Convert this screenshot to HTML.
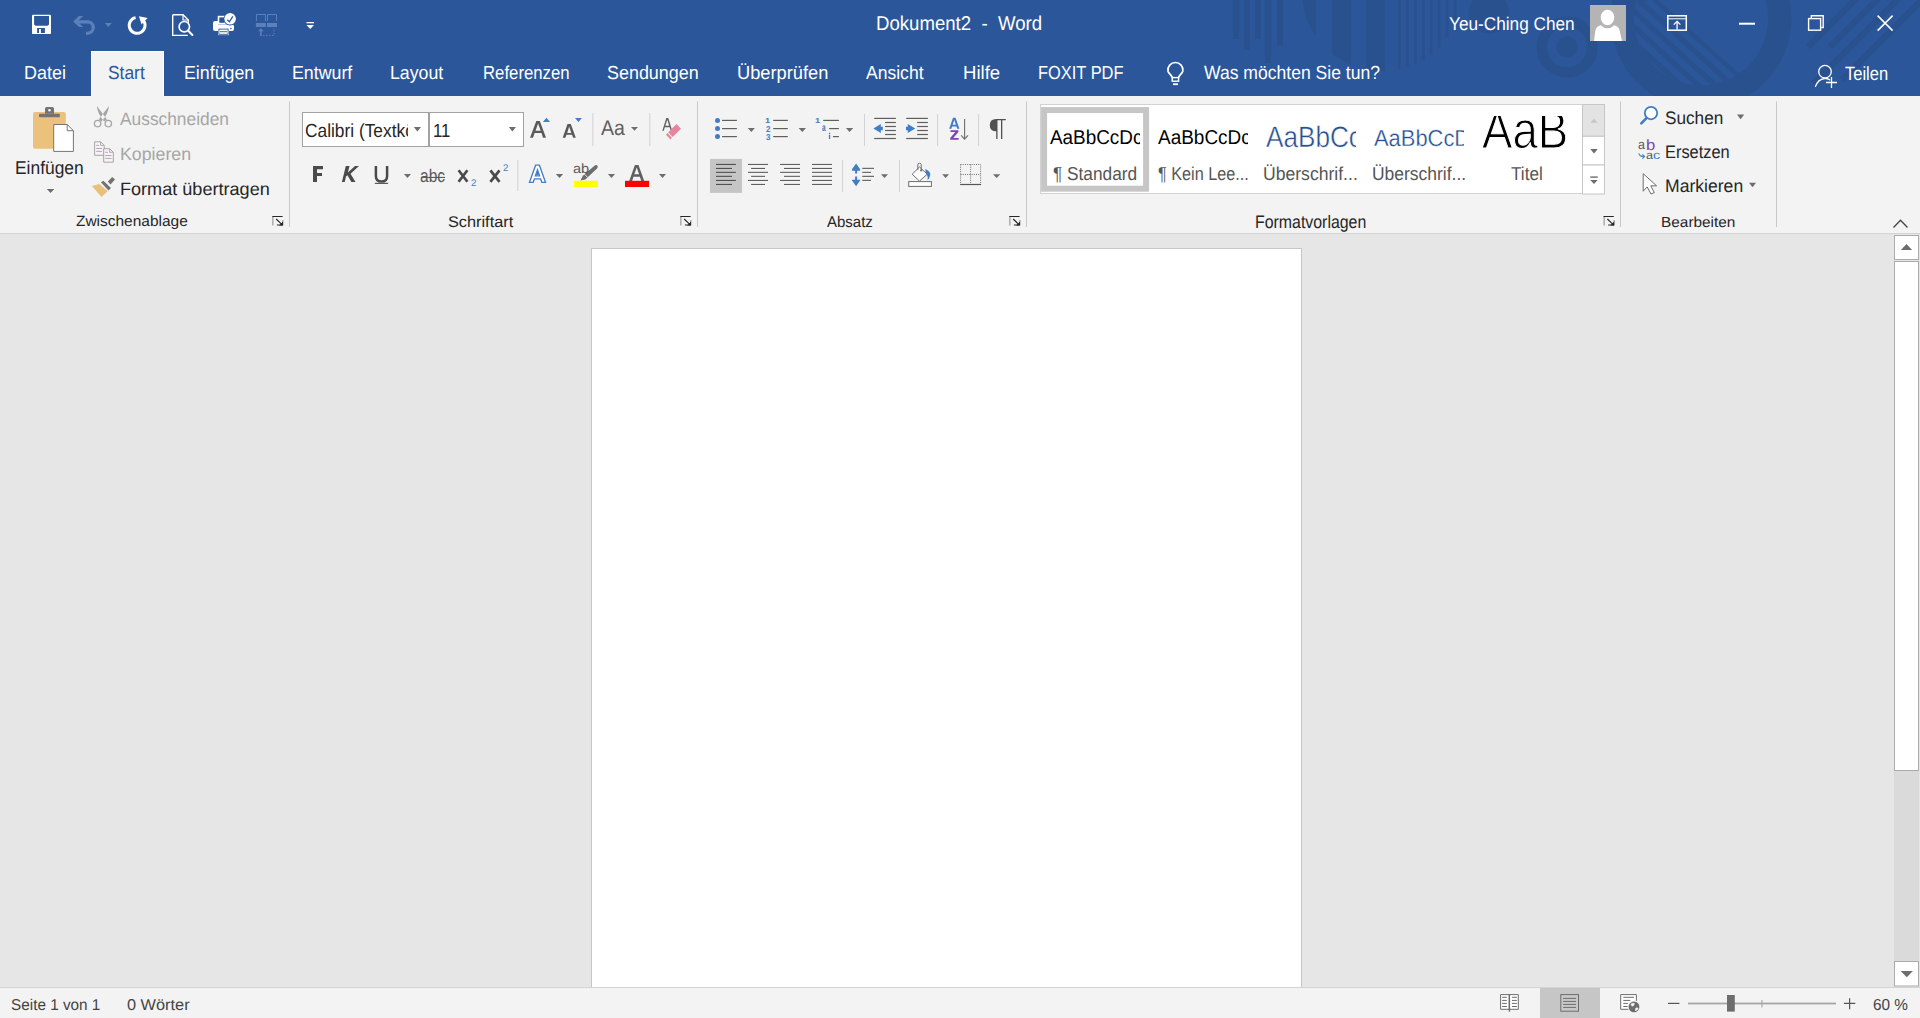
<!DOCTYPE html>
<html><head><meta charset="utf-8"><title>Dokument2 - Word</title>
<style>
html,body{margin:0;padding:0}
body{width:1920px;height:1018px;position:relative;overflow:hidden;background:#e6e6e6;font-family:"Liberation Sans",sans-serif}
.r{position:absolute}
.tx{position:absolute;white-space:pre;transform-origin:0 0;font-family:"Liberation Sans",sans-serif;text-rendering:geometricPrecision}
.clip{position:absolute;overflow:hidden}
svg{position:absolute;left:0;top:0}
</style></head><body>
<div class="r" style="left:0;top:0;width:1920px;height:96px;background:#2b579a"></div>
<div class="r" style="left:91px;top:51px;width:73px;height:45px;background:#fdfdfd"></div><div class="r" style="left:92px;top:52px;width:71px;height:44px;background:#f3f3f3"></div>
<div class="r" style="left:0;top:96px;width:1920px;height:137px;background:#f3f3f3"></div>
<div class="r" style="left:0;top:233px;width:1920px;height:1px;background:#d4d4d4"></div>
<div class="r" style="left:591px;top:248px;width:709px;height:739px;background:#fff;border:1px solid #c6c6c6;border-bottom:none"></div>
<div class="r" style="left:0;top:987px;width:1920px;height:1px;background:#d4d4d4"></div>
<div class="r" style="left:0;top:988px;width:1920px;height:30px;background:#f3f3f3"></div>
<div class="r" style="left:1540px;top:988px;width:60px;height:30px;background:#c6c6c6"></div>
<svg width="1920" height="1018" viewBox="0 0 1920 1018"><g fill="#29518e"><rect x="1233" y="0" width="6" height="39"/><rect x="1244" y="0" width="6" height="50"/><rect x="1255" y="0" width="6" height="39"/><rect x="1265" y="0" width="6" height="63"/><rect x="1277" y="0" width="6" height="46"/><path d="M1302.5 0 Q1305 22 1316 36 V0 Z"/><path d="M1332 0 H1351 V65 L1332 54 Z"/><path d="M1366 0 H1385 V71 H1366 Z"/><rect x="1398.00" y="0" width="2.8" height="69.4"/><rect x="1405.95" y="0" width="2.8" height="67.1"/><rect x="1413.90" y="0" width="2.8" height="63.8"/><rect x="1421.85" y="0" width="2.8" height="60.4"/><rect x="1429.80" y="0" width="2.8" height="54.8"/><rect x="1437.75" y="0" width="2.8" height="47.4"/><rect x="1445.70" y="0" width="2.8" height="37.5"/><rect x="1453.65" y="0" width="2.8" height="27.0"/><circle cx="1489" cy="13" r="20.6"/><circle cx="1567" cy="47" r="25.3" fill="none" stroke="#29518e" stroke-width="10.5"/><circle cx="1567" cy="47" r="10.5"/></g><defs><clipPath id="tb"><rect x="0" y="0" width="1920" height="96"/></clipPath><clipPath id="inner"><circle cx="1701" cy="18.4" r="67"/></clipPath></defs><g clip-path="url(#tb)"><circle cx="1701" cy="18.4" r="78.75" fill="none" stroke="#29518e" stroke-width="23.5"/><g clip-path="url(#inner)"><path d="M1658 0 L1778 109.2 L1500 109.2 L1500 0 Z" fill="#29518e"/><line x1="1647" y1="0" x2="1767" y2="109.2" stroke="#2b579a" stroke-width="6.3"/><line x1="1630" y1="0" x2="1750" y2="109.2" stroke="#2b579a" stroke-width="6.3"/><line x1="1613" y1="0" x2="1733" y2="109.2" stroke="#2b579a" stroke-width="6.3"/><line x1="1596" y1="0" x2="1716" y2="109.2" stroke="#2b579a" stroke-width="6.3"/><line x1="1579" y1="0" x2="1699" y2="109.2" stroke="#2b579a" stroke-width="6.3"/></g><line x1="1808" y1="47" x2="1857" y2="-2" stroke="#29518e" stroke-width="6.5"/><line x1="1830" y1="47" x2="1879" y2="-2" stroke="#29518e" stroke-width="6.5"/><line x1="1813" y1="84" x2="1910" y2="-13" stroke="#29518e" stroke-width="6.5"/><line x1="1842" y1="80" x2="1925" y2="-3" stroke="#29518e" stroke-width="6.5"/></g><rect x="32" y="14.8" width="19" height="19.3" rx="1.2" fill="#ffffff"/><path d="M34.1 16.1 H49 V24.4 L47.6 25.8 H35.5 L34.1 24.4 Z" fill="#2b579a"/><rect x="37.1" y="28" width="7.8" height="5" fill="#2b579a"/><rect x="39" y="29" width="1.9" height="4" fill="#ffffff"/><path d="M77 21.8 H87.5 A5.7 5.7 0 0 1 87.5 33.3 H86" fill="none" stroke="#5b80ba" stroke-width="3.3"/><path d="M73.2 21.5 L79 15.9 H83.1 L77.5 21.5 L83.1 27.1 H79 Z" fill="#5b80ba"/><path d="M104.9 23.1 H111.9 L108.4 27.1 Z" fill="#5b80ba"/><path d="M135.6 17.6 A7.9 7.9 0 1 0 143.2 20.3" fill="none" stroke="#ffffff" stroke-width="3"/><path d="M139 16.2 L147.6 17.9 L141.5 24.6 Z" fill="#ffffff"/><path d="M172.7 14.7 H183 L188.3 20 V31 M172.7 14.7 V35.4 H187.8" fill="none" stroke="#ffffff" stroke-width="1.4"/><path d="M183 14.7 V20 H188.3" fill="none" stroke="#ffffff" stroke-width="1.2"/><circle cx="184.3" cy="26.7" r="5.2" fill="#2b579a" stroke="#ffffff" stroke-width="1.7"/><line x1="188" y1="30.5" x2="192.4" y2="35" stroke="#ffffff" stroke-width="2" stroke-linecap="round"/><rect x="218.5" y="16.6" width="7" height="7" fill="#2b579a" stroke="#ffffff" stroke-width="1.6"/><path d="M213 23 Q213 21 215 21 H218 V24.5 H232 Q234 24.5 234 26.5 V29 Q234 31 232 31 H215 Q213 31 213 29 Z" fill="#ffffff"/><rect x="218" y="28.3" width="11" height="6.8" fill="#ffffff"/><rect x="218.9" y="29.1" width="9.2" height="5.2" fill="none" stroke="#2b579a" stroke-width="0.9"/><line x1="220" y1="31.7" x2="227" y2="31.7" stroke="#2b579a" stroke-width="0.9"/><circle cx="230.9" cy="28.6" r="0.8" fill="#2b579a"/><circle cx="230.1" cy="18.8" r="6.6" fill="#2b579a"/><circle cx="230.1" cy="18.8" r="5.8" fill="#ffffff"/><path d="M227.3 19.8 L229.4 21.8 L232.8 16.3" fill="none" stroke="#2b579a" stroke-width="1.3"/><path d="M256.4 21 V14.5 H265.4 V21 M267.5 21 V14.5 H276.5 V21" fill="none" stroke="#5b80ba" stroke-width="1"/><rect x="255.9" y="23" width="10" height="4" fill="#5b80ba"/><rect x="267" y="23" width="10" height="4" fill="#5b80ba"/><path d="M258 31.2 L260.9 28.2 L263.8 31.2 Z" fill="#5b80ba"/><rect x="260.1" y="30" width="1.6" height="6" fill="#5b80ba"/><path d="M263 35.4 H274 V28" fill="none" stroke="#5b80ba" stroke-width="1" stroke-dasharray="1.5 1.5"/><rect x="306.5" y="22" width="7.5" height="1.3" fill="#ffffff"/><path d="M306.5 25 H314 L310.25 29 Z" fill="#ffffff"/><rect x="1590" y="5" width="36" height="36" fill="#b4b4b4"/><path d="M1594 41 L1595.3 31 Q1596 26.2 1600.8 25.2 Q1604 28.3 1607.5 28.3 Q1611 28.3 1614.2 25.2 Q1619 26.2 1619.7 31 L1622 41 Z" fill="#ffffff"/><ellipse cx="1607.5" cy="17.6" rx="7.6" ry="8.6" fill="#b4b4b4"/><ellipse cx="1607.5" cy="17.5" rx="6.8" ry="7.8" fill="#ffffff"/><rect x="1667.8" y="15.8" width="18.5" height="14.4" fill="none" stroke="#ffffff" stroke-width="1.5"/><line x1="1668" y1="18.8" x2="1686" y2="18.8" stroke="#ffffff" stroke-width="1"/><line x1="1677.1" y1="21.2" x2="1677.1" y2="29.5" stroke="#ffffff" stroke-width="1.3"/><path d="M1673.8 24.6 L1677.1 21.3 L1680.4 24.6" fill="none" stroke="#ffffff" stroke-width="1.3"/><rect x="1739" y="22.7" width="16" height="2" fill="#ffffff"/><path d="M1811.3 17.9 V15.8 H1823.2 V27.5 H1821.2" fill="none" stroke="#ffffff" stroke-width="1.4"/><rect x="1808.6" y="18.6" width="12" height="11.6" fill="none" stroke="#ffffff" stroke-width="1.4"/><path d="M1877.6 15.6 L1892.6 30.6 M1892.6 15.6 L1877.6 30.6" stroke="#ffffff" stroke-width="1.5"/><path d="M1172.2 77.5 C1171.6 74.8 1168.6 73.5 1168 71.2 A7.5 7.5 0 1 1 1182.8 71.2 C1182.2 73.5 1179.2 74.8 1178.6 77.5" fill="none" stroke="#ffffff" stroke-width="1.7"/><rect x="1172.2" y="77.6" width="6.4" height="3.6" fill="none" stroke="#ffffff" stroke-width="1.4"/><rect x="1173" y="83.3" width="5" height="1.8" fill="#ffffff"/><circle cx="1825" cy="71.7" r="6.3" fill="none" stroke="#ffffff" stroke-width="1.3"/><path d="M1815.5 86.4 Q1818 79.5 1824.5 78.5 Q1827.5 78.3 1829.6 79.8" fill="none" stroke="#ffffff" stroke-width="1.3" stroke-linecap="round"/><path d="M1831.5 77 V88 M1826 82.5 H1837" stroke="#ffffff" stroke-width="1.3"/><rect x="33" y="112" width="32.8" height="36.8" rx="2" fill="#eac27c"/><rect x="39" y="113.7" width="20.8" height="3.6" rx="0.8" fill="#737373"/><path d="M45 113.8 V108.5 Q45 106.9 46.6 106.9 H52.4 Q54 106.9 54 108.5 V113.8 Z" fill="#737373"/><circle cx="49.5" cy="110.2" r="1.3" fill="#f3f3f3"/><path d="M53.7 124.5 H67.2 L73.4 130.7 V151.4 H53.7 Z" fill="#fff" stroke="#757575" stroke-width="1"/><path d="M67.2 124.5 V130.7 H73.4" fill="none" stroke="#757575" stroke-width="1"/><path d="M46.8 189 H54.3 L50.55 193 Z" fill="#6d6d6d"/><path d="M96.8 106 Q97.6 114 104.2 121.6 L107 119.4 Q101.5 112 96.8 106 Z M109 106 Q108.2 114 101.6 121.6 L98.8 119.4 Q104.3 112 109 106 Z" fill="#a6a6a6"/><circle cx="97.6" cy="123.6" r="3.2" fill="none" stroke="#a6a6a6" stroke-width="1.3"/><circle cx="108.3" cy="123.6" r="3.2" fill="none" stroke="#a6a6a6" stroke-width="1.3"/><path d="M94.6 141.8 H100.6 L104.2 145.4 V155.3 H94.6 Z" fill="#f8f2f8" stroke="#a6a6a6" stroke-width="1"/><path d="M100.6 141.8 V145.4 H104.2" fill="none" stroke="#a6a6a6" stroke-width="0.9"/><path d="M96.2 145.4 H99 M96.2 148.5 H102 M96.2 151.4 H102" stroke="#a6a6a6" stroke-width="0.9"/><path d="M103.7 148.7 H109.7 L113.3 152.3 V162.2 H103.7 Z" fill="#f8f2f8" stroke="#a6a6a6" stroke-width="1"/><path d="M109.7 148.7 V152.3 H113.3" fill="none" stroke="#a6a6a6" stroke-width="0.9"/><path d="M105.2 152.3 H108 M105.2 155.5 H111.5 M105.2 158.4 H111.5" stroke="#a6a6a6" stroke-width="0.9"/><path d="M91.9 186.1 L99.4 184.1 L107.7 191.2 L101.5 197 Z" fill="#e8c17a"/><path d="M100.9 182.3 L103.4 180.8 L111 187.9 L108.4 190.4 Z" fill="#727272"/><path d="M107.8 181.4 L112.2 176.9 L115 179.5 L110.5 184.4 Z" fill="#727272"/><rect x="289.0" y="101.5" width="1" height="125.5" fill="#c8c8c8"/><rect x="697.0" y="101.5" width="1" height="125.5" fill="#c8c8c8"/><rect x="1026.0" y="101.5" width="1" height="125.5" fill="#c8c8c8"/><rect x="1620.0" y="101.5" width="1" height="125.5" fill="#c8c8c8"/><rect x="1776.0" y="101.5" width="1" height="125.5" fill="#c8c8c8"/><rect x="592.3" y="113" width="1" height="33" fill="#d2d2d2"/><rect x="649.3" y="113" width="1" height="33" fill="#d2d2d2"/><rect x="517.3" y="160" width="1" height="31" fill="#d2d2d2"/><rect x="864.0" y="114" width="1" height="32" fill="#d2d2d2"/><rect x="937.1" y="114" width="1" height="32" fill="#d2d2d2"/><rect x="978.1" y="114" width="1" height="32" fill="#d2d2d2"/><rect x="842.0" y="160" width="1" height="32" fill="#d2d2d2"/><rect x="899.0" y="160" width="1" height="32" fill="#d2d2d2"/><path d="M272.9 216.0 V225.5 M282.9 220.0 V225.3" stroke="#8a8a8a" stroke-width="1"/><path d="M272.4 216.5 H282.6 M276.9 225.0 H282.7 M276.2 219.0 L282.0 224.6" stroke="#262626" stroke-width="1.1"/><path d="M283.0 225.4 L279.2 225.4 L283.0 221.6 Z" fill="#262626"/><path d="M680.9 216.0 V225.5 M690.9 220.0 V225.3" stroke="#8a8a8a" stroke-width="1"/><path d="M680.4 216.5 H690.6 M684.9 225.0 H690.7 M684.2 219.0 L690.0 224.6" stroke="#262626" stroke-width="1.1"/><path d="M691.0 225.4 L687.2 225.4 L691.0 221.6 Z" fill="#262626"/><path d="M1009.9 216.0 V225.5 M1019.9 220.0 V225.3" stroke="#8a8a8a" stroke-width="1"/><path d="M1009.4 216.5 H1019.6 M1013.9 225.0 H1019.7 M1013.2 219.0 L1019.0 224.6" stroke="#262626" stroke-width="1.1"/><path d="M1020.0 225.4 L1016.2 225.4 L1020.0 221.6 Z" fill="#262626"/><path d="M1604.1 216.0 V225.5 M1614.1 220.0 V225.3" stroke="#8a8a8a" stroke-width="1"/><path d="M1603.6 216.5 H1613.8 M1608.1 225.0 H1613.9 M1607.4 219.0 L1613.2 224.6" stroke="#262626" stroke-width="1.1"/><path d="M1614.2 225.4 L1610.4 225.4 L1614.2 221.6 Z" fill="#262626"/><rect x="302.5" y="112.5" width="126" height="34" fill="#fff" stroke="#a2a2a2" stroke-width="1"/><rect x="429.5" y="112.5" width="94" height="34" fill="#fff" stroke="#a2a2a2" stroke-width="1"/><path d="M413.8 127 H421 L417.4 131.6 Z" fill="#6d6d6d"/><path d="M508.8 127 H516 L512.4 131.6 Z" fill="#6d6d6d"/><path d="M530 137.8 L536.3 120.9 H539.8 L546 137.8 H543 L541.5 133 H534.6 L533 137.8 Z M535.5 130.8 H540.7 L538.1 123.5 Z" fill="#595959" fill-rule="evenodd"/><path d="M542.9 121.9 H550 L546.5 117.8 Z" fill="#417dc4"/><path d="M562.7 137.8 L567.5 124 H570.8 L575.8 137.8 H573.2 L572 134.7 H566.5 L565.3 137.8 Z M567.2 132.9 H571.3 L569.2 126.5 Z" fill="#595959" fill-rule="evenodd"/><path d="M575 117.9 H581.9 L578.5 122.1 Z" fill="#417dc4"/><path d="M631 127 H638 L634.5 130.8 Z" fill="#6d6d6d"/><path d="M662.3 130.8 L666.3 118 H668.3 L672.2 130.8 H670.7 L669.7 127.3 H664.8 L663.8 130.8 Z M665.3 125.8 H669.2 L667.3 119.8 Z" fill="#5f5f5f" fill-rule="evenodd"/><path d="M676.5 124 L681 128.7 L672.7 137 L668.2 132.3 Z" fill="#e6859b"/><path d="M667.5 133 L671.9 137.7 L670.5 139.5 L666 134.7 Z" fill="#e6859b"/><path d="M313 166 H323 V169.2 H317 V173 H322 V175.9 H317 V182 H313 Z" fill="#4a4a4a"/><path d="M345.8 166 H349.5 L347.9 172.6 L355 166 H359 L350.5 173.8 L355.5 182 H351.4 L347.4 175.3 L346 176.6 L344.7 182 H341.9 Z" fill="#4a4a4a"/><path d="M375.9 166 V176 Q375.9 181.6 381.5 181.6 Q387.1 181.6 387.1 176 V166" fill="none" stroke="#4a4a4a" stroke-width="2.5"/><rect x="374.9" y="182.8" width="13.2" height="1.1" fill="#4a4a4a"/><path d="M403.9 174 H411 L407.45 178 Z" fill="#6d6d6d"/><rect x="421" y="176.9" width="24.1" height="1.1" fill="#5a5a5a"/><path d="M458.6 170.3 L467.4 181.8 M467.4 170.3 L458.6 181.8" stroke="#4a4a4a" stroke-width="2.7"/><path d="M490.4 170.3 L499.5 181.8 M499.5 170.3 L490.4 181.8" stroke="#4a4a4a" stroke-width="2.7"/><path d="M529.5 182.3 L535.6 165.2 H539.4 L545.5 182.3 H541.8 L540.6 178.8 H534.4 L533.2 182.3 Z M535.4 175.8 H539.6 L537.5 169.8 Z" fill="#fff" stroke="#417dc4" stroke-width="1.3" fill-rule="evenodd"/><path d="M536 175 H539 L537.5 170.5 Z" fill="#417dc4"/><path d="M555.8 173.9 H563.2 L559.5 178 Z" fill="#6d6d6d"/><path d="M580.5 180.6 L582.8 175.7 L594.8 165.6 Q596.6 164.4 597.6 166 Q598.2 167.2 597 168.6 L585.4 179.6 Z" fill="#6d6d6d"/><line x1="584.6" y1="174.4" x2="587.6" y2="177.4" stroke="#f3f3f3" stroke-width="0.9"/><rect x="574" y="180.8" width="24" height="6.2" fill="#ffff00"/><path d="M607.9 173.9 H615 L611.45 178 Z" fill="#6d6d6d"/><path d="M629.2 181 L634.9 165 H638.5 L644.2 181 H641.3 L639.9 176.8 H633.5 L632.1 181 Z M634.3 174.3 H639.1 L636.7 167.5 Z" fill="#5f5f5f" fill-rule="evenodd"/><rect x="625" y="180.8" width="24" height="6.2" fill="#ff0000"/><path d="M659 173.9 H666 L662.5 178 Z" fill="#6d6d6d"/><circle cx="717.5" cy="120.4" r="2.5" fill="#417dc4"/><rect x="722.1" y="119.8" width="14.8" height="1.2" fill="#5f5f5f"/><circle cx="717.5" cy="128.6" r="2.5" fill="#417dc4"/><rect x="722.1" y="128.0" width="14.8" height="1.2" fill="#5f5f5f"/><circle cx="717.5" cy="136.6" r="2.5" fill="#417dc4"/><rect x="722.1" y="136.0" width="14.8" height="1.2" fill="#5f5f5f"/><path d="M747.8 128 H754.9 L751.3499999999999 131.9 Z" fill="#6d6d6d"/><rect x="773.2" y="119.8" width="14.6" height="1.2" fill="#5f5f5f"/><rect x="773.2" y="128.0" width="14.6" height="1.2" fill="#5f5f5f"/><rect x="773.2" y="136.0" width="14.6" height="1.2" fill="#5f5f5f"/><path d="M798.6 128 H806 L802.3 131.9 Z" fill="#6d6d6d"/><rect x="823.2" y="119.8" width="15.7" height="1.2" fill="#5f5f5f"/><rect x="829.1" y="128" width="9.8" height="1.2" fill="#5f5f5f"/><rect x="833" y="136" width="5.9" height="1.2" fill="#5f5f5f"/><path d="M845.9 128 H853.2 L849.55 131.9 Z" fill="#6d6d6d"/><rect x="828.9" y="132.7" width="1.3" height="1.3" fill="#417dc4"/><rect x="828.9" y="134.7" width="1.3" height="4.3" fill="#417dc4"/><rect x="874.2" y="117.8" width="21.7" height="1.2" fill="#5f5f5f"/><rect x="874.2" y="137.9" width="21.7" height="1.2" fill="#5f5f5f"/><rect x="885.1" y="121.9" width="10.8" height="1.2" fill="#5f5f5f"/><rect x="885.1" y="125.9" width="10.8" height="1.2" fill="#5f5f5f"/><rect x="885.1" y="129.9" width="10.8" height="1.2" fill="#5f5f5f"/><rect x="885.1" y="133.9" width="10.8" height="1.2" fill="#5f5f5f"/><rect x="906.2" y="117.8" width="21.7" height="1.2" fill="#5f5f5f"/><rect x="906.2" y="137.9" width="21.7" height="1.2" fill="#5f5f5f"/><rect x="917.2" y="121.9" width="10.7" height="1.2" fill="#5f5f5f"/><rect x="917.2" y="125.9" width="10.7" height="1.2" fill="#5f5f5f"/><rect x="917.2" y="129.9" width="10.7" height="1.2" fill="#5f5f5f"/><rect x="917.2" y="133.9" width="10.7" height="1.2" fill="#5f5f5f"/><path d="M873.4 128.5 L880.8 124.1 V126.8 H882.8 V130.2 H880.8 V133 Z" fill="#417dc4"/><path d="M915.2 128.5 L907.8 124.1 V126.8 H906 V130.2 H907.8 V133 Z" fill="#417dc4"/><path d="M949.2 128.75 L953 117.8 H955.6 L959.4 128.75 H957.2 L956.5 126.6 H952 L951.4 128.75 Z M952.6 124.7 H955.9 L954.3 119.9 Z" fill="#417dc4" fill-rule="evenodd"/><path d="M950.5 130.2 H958.4 V132 L953.3 138 H958.6 V139.8 H950.2 V138 L955.3 132 H950.5 Z" fill="#7f44ad"/><path d="M964.6 119 V139" stroke="#6d6d6d" stroke-width="1.1"/><path d="M961.2 135.4 L964.6 139.2 L968 135.4" fill="none" stroke="#6d6d6d" stroke-width="1.1"/><path d="M996.2 119 H1005.8 V120.3 H1002.3 V138.9 H1001 V120.3 H997.5 V138.9 H996.2 V131.3 Q989.8 131.3 989.8 125.2 Q989.8 119 996.2 119 Z" fill="#505050"/><rect x="710" y="158.9" width="32" height="34" fill="#c5c5c5"/><rect x="716" y="163.9" width="19.9" height="1.1" fill="#505050"/><rect x="748.0" y="163.9" width="20.0" height="1.1" fill="#5f5f5f"/><rect x="780.1" y="163.9" width="19.9" height="1.1" fill="#5f5f5f"/><rect x="812" y="163.9" width="20" height="1.1" fill="#5f5f5f"/><rect x="716" y="167.9" width="16.0" height="1.1" fill="#505050"/><rect x="751.1" y="167.9" width="13.9" height="1.1" fill="#5f5f5f"/><rect x="784.0" y="167.9" width="16.0" height="1.1" fill="#5f5f5f"/><rect x="812" y="167.9" width="20" height="1.1" fill="#5f5f5f"/><rect x="716" y="171.8" width="19.9" height="1.1" fill="#505050"/><rect x="748.0" y="171.8" width="20.0" height="1.1" fill="#5f5f5f"/><rect x="780.1" y="171.8" width="19.9" height="1.1" fill="#5f5f5f"/><rect x="812" y="171.8" width="20" height="1.1" fill="#5f5f5f"/><rect x="716" y="175.8" width="16.0" height="1.1" fill="#505050"/><rect x="751.1" y="175.8" width="13.9" height="1.1" fill="#5f5f5f"/><rect x="784.0" y="175.8" width="16.0" height="1.1" fill="#5f5f5f"/><rect x="812" y="175.8" width="20" height="1.1" fill="#5f5f5f"/><rect x="716" y="179.9" width="19.9" height="1.1" fill="#505050"/><rect x="748.0" y="179.9" width="20.0" height="1.1" fill="#5f5f5f"/><rect x="780.1" y="179.9" width="19.9" height="1.1" fill="#5f5f5f"/><rect x="812" y="179.9" width="20" height="1.1" fill="#5f5f5f"/><rect x="716" y="183.9" width="16.0" height="1.1" fill="#505050"/><rect x="751.1" y="183.9" width="13.9" height="1.1" fill="#5f5f5f"/><rect x="784.0" y="183.9" width="16.0" height="1.1" fill="#5f5f5f"/><rect x="812" y="183.9" width="20" height="1.1" fill="#5f5f5f"/><path d="M856.1 163.5 L860.1 169.2 V170.8 H857.1 V173.4 H855.1 V170.8 H852 V169.2 Z" fill="#417dc4"/><path d="M856.1 186.2 L860.1 180.5 V179.8 H857.1 V176.4 H855.1 V179.8 H852 V180.5 Z" fill="#417dc4"/><rect x="862.2" y="167.8" width="11.8" height="1.1" fill="#5f5f5f"/><rect x="862.2" y="171.8" width="8.8" height="1.1" fill="#5f5f5f"/><rect x="862.2" y="175.8" width="11.8" height="1.1" fill="#5f5f5f"/><rect x="862.2" y="179.8" width="8.8" height="1.1" fill="#5f5f5f"/><path d="M881 174.2 H888 L884.5 177.9 Z" fill="#6d6d6d"/><path d="M912.2 174.2 L919.5 167 L927.2 174.2 L919.5 181.1 Z" fill="#fff" stroke="#6d6d6d" stroke-width="1"/><path d="M917.8 170 V164.5 Q917.8 163.3 919.5 163.3 Q921.2 163.3 921.2 164.5 V170.4" fill="none" stroke="#6d6d6d" stroke-width="1"/><circle cx="921.2" cy="170.5" r="1.1" fill="#6d6d6d"/><path d="M925.3 169 Q930.8 171.5 930.2 175 Q929.8 178 927.6 180.4 Q928.3 176 925.8 173 Z" fill="#417dc4"/><rect x="908.7" y="181.6" width="22.7" height="4.8" fill="#fff" stroke="#6d6d6d" stroke-width="1"/><path d="M942.2 174.2 H949 L945.6 177.9 Z" fill="#6d6d6d"/><path d="M960.6 164.5 H980.6 V183 M960.6 164.5 V183 M970.6 164.5 V183 M960.6 174.5 H980.6" fill="none" stroke="#6d6d6d" stroke-width="1" stroke-dasharray="1 1.2"/><rect x="960.1" y="183.9" width="21" height="1.2" fill="#555"/><path d="M993 174.2 H1000.3 L996.65 177.9 Z" fill="#6d6d6d"/><rect x="1040.5" y="104.5" width="542" height="89" fill="#fff" stroke="#d2d2d2" stroke-width="1"/><rect x="1044.1" y="110.1" width="102" height="78.6" fill="none" stroke="#c6c6c6" stroke-width="6"/><rect x="1582.5" y="104.5" width="22" height="31.8" fill="#e3e3e3" stroke="#c6c6c6" stroke-width="1"/><rect x="1582.5" y="136.3" width="22" height="28.7" fill="#fff" stroke="#c6c6c6" stroke-width="1"/><rect x="1582.5" y="165" width="22" height="29" fill="#fff" stroke="#c6c6c6" stroke-width="1"/><path d="M1590.3 122.8 H1597.7 L1594.0 118.7 Z" fill="#c6c6c6"/><path d="M1590.3 149.1 H1597.7 L1594.0 153.5 Z" fill="#6d6d6d"/><rect x="1590.3" y="176.4" width="7.4" height="1.4" fill="#6d6d6d"/><path d="M1590.3 180 H1597.7 L1594.0 184 Z" fill="#6d6d6d"/><circle cx="1651" cy="113.1" r="6.2" fill="#fff" stroke="#417dc4" stroke-width="1.8"/><line x1="1646.2" y1="118.4" x2="1641.3" y2="123.4" stroke="#417dc4" stroke-width="2.6" stroke-linecap="round"/><path d="M1737 114.5 H1744.2 L1740.6 119.2 Z" fill="#6d6d6d"/><path d="M1638.8 153.3 Q1639.5 156.5 1643.8 156.5" fill="none" stroke="#417dc4" stroke-width="1.1"/><path d="M1642.3 154.3 L1644.6 156.5 L1642.3 158.7" fill="none" stroke="#417dc4" stroke-width="1.1"/><path d="M1643.2 173.7 V191.2 L1647.2 186.9 L1651 194 L1654.3 192.6 L1650.8 185.8 H1656.6 Z" fill="#fff" stroke="#6d6d6d" stroke-width="1" stroke-linejoin="round"/><path d="M1749 182.8 H1756 L1752.5 187.2 Z" fill="#6d6d6d"/><path d="M1893.5 227.5 L1900.5 220.3 L1907.5 227.5" fill="none" stroke="#444" stroke-width="1.3"/><rect x="1894.5" y="235.5" width="24" height="24" fill="#fff" stroke="#ababab" stroke-width="1"/><path d="M1900.9 250 H1912.1 L1906.5 244 Z" fill="#6d6d6d"/><rect x="1894.5" y="261.5" width="24" height="509" fill="#fff" stroke="#ababab" stroke-width="1"/><rect x="1894" y="771" width="25" height="190" fill="#dadada"/><rect x="1894.5" y="961.5" width="24" height="24.5" fill="#fff" stroke="#ababab" stroke-width="1"/><path d="M1900.7 970.9 H1912.9 L1906.8000000000002 977.2 Z" fill="#6d6d6d"/><path d="M1500.6 994.6 H1509.4 V1009.3 H1500.6 Z M1509.4 994.6 H1518.3 V1009.3 H1509.4 Z" fill="#fff" stroke="#6d6d6d" stroke-width="1"/><line x1="1509.4" y1="994" x2="1509.4" y2="1011.6" stroke="#6d6d6d" stroke-width="1.4"/><rect x="1502.1" y="996.8" width="4.7" height="1" fill="#6d6d6d"/><rect x="1512" y="996.8" width="4.9" height="1" fill="#6d6d6d"/><rect x="1502.1" y="999.9" width="4.7" height="1" fill="#6d6d6d"/><rect x="1512" y="999.9" width="4.9" height="1" fill="#6d6d6d"/><rect x="1502.1" y="1002.9" width="4.7" height="1" fill="#6d6d6d"/><rect x="1512" y="1002.9" width="4.9" height="1" fill="#6d6d6d"/><rect x="1502.1" y="1006.0" width="4.7" height="1" fill="#6d6d6d"/><rect x="1512" y="1006.0" width="4.9" height="1" fill="#6d6d6d"/><rect x="1560.8" y="994.6" width="17.7" height="16.6" fill="#c8c8c8" stroke="#6d6d6d" stroke-width="1"/><rect x="1563.1" y="997.9" width="12.9" height="1" fill="#6d6d6d"/><rect x="1563.1" y="1000.9" width="12.9" height="1" fill="#6d6d6d"/><rect x="1563.1" y="1003.9" width="12.9" height="1" fill="#6d6d6d"/><rect x="1563.1" y="1006.9" width="12.9" height="1" fill="#6d6d6d"/><path d="M1629 1009.3 H1620.7 V994.6 H1636.4 V1001" fill="#fff" stroke="#6d6d6d" stroke-width="1"/><rect x="1623.3" y="996.8" width="10.7" height="1" fill="#6d6d6d"/><rect x="1623.3" y="999.9" width="7.0" height="1" fill="#6d6d6d"/><rect x="1623.3" y="1002.9" width="4.5" height="1" fill="#6d6d6d"/><rect x="1623.3" y="1006.0" width="4.5" height="1" fill="#6d6d6d"/><circle cx="1634" cy="1006.9" r="6.3" fill="#f3f3f3"/><circle cx="1634" cy="1006.9" r="5.4" fill="#6d6d6d"/><path d="M1630.5 1004 Q1633 1002.5 1635 1003.5 Q1634 1006 1632 1006.5 Z M1635.5 1008 Q1637.5 1007 1638.5 1008.5 Q1637 1011 1635 1011 Z" fill="#f3f3f3"/><rect x="1668" y="1002.8" width="11.4" height="1.2" fill="#555"/><rect x="1688" y="1002.6" width="148" height="1.8" fill="#a6a6a6"/><rect x="1761.4" y="1000" width="1.1" height="7.5" fill="#a6a6a6"/><rect x="1727" y="995" width="7.8" height="16.6" fill="#6d6d6d"/><path d="M1843.9 1003.4 H1855.3 M1849.6 998.3 V1009.3" stroke="#555" stroke-width="1.2"/></svg>
<div class="tx" style="left:875.63px;top:15.00px;font-size:19.928px;line-height:19.928px;color:#ffffff;transform:scaleX(0.9343)">Dokument2  -  Word</div>
<div class="tx" style="left:1448.56px;top:15.00px;font-size:18.406px;line-height:18.406px;color:#ffffff;transform:scaleX(0.9356)">Yeu-Ching Chen</div>
<div class="tx" style="left:23.55px;top:64.00px;font-size:18.841px;line-height:18.841px;color:#ffffff;transform:scaleX(0.9524)">Datei</div>
<div class="tx" style="left:108.08px;top:64.00px;font-size:18.841px;line-height:18.841px;color:#2b579a;transform:scaleX(0.9231)">Start</div>
<div class="tx" style="left:183.56px;top:64.00px;font-size:18.841px;line-height:18.841px;color:#ffffff;transform:scaleX(0.9444)">Einfügen</div>
<div class="tx" style="left:291.56px;top:64.00px;font-size:18.841px;line-height:18.841px;color:#ffffff;transform:scaleX(0.9444)">Entwurf</div>
<div class="tx" style="left:390.06px;top:64.00px;font-size:18.841px;line-height:18.841px;color:#ffffff;transform:scaleX(0.9420)">Layout</div>
<div class="tx" style="left:482.61px;top:64.00px;font-size:18.841px;line-height:18.841px;color:#ffffff;transform:scaleX(0.8895)">Referenzen</div>
<div class="tx" style="left:607.05px;top:64.00px;font-size:18.841px;line-height:18.841px;color:#ffffff;transform:scaleX(0.9521)">Sendungen</div>
<div class="tx" style="left:736.53px;top:64.00px;font-size:18.841px;line-height:18.841px;color:#ffffff;transform:scaleX(0.9701)">Überprüfen</div>
<div class="tx" style="left:866.00px;top:64.00px;font-size:18.841px;line-height:18.841px;color:#ffffff;transform:scaleX(0.9315)">Ansicht</div>
<div class="tx" style="left:962.51px;top:64.00px;font-size:18.841px;line-height:18.841px;color:#ffffff;transform:scaleX(0.9861)">Hilfe</div>
<div class="tx" style="left:1037.88px;top:64.00px;font-size:18.841px;line-height:18.841px;color:#ffffff;transform:scaleX(0.8724)">FOXIT PDF</div>
<div class="tx" style="left:1204.00px;top:64.00px;font-size:19.130px;line-height:19.130px;color:#ffffff;transform:scaleX(0.9188)">Was möchten Sie tun?</div>
<div class="tx" style="left:1845.00px;top:65.00px;font-size:19.130px;line-height:19.130px;color:#ffffff;transform:scaleX(0.8633)">Teilen</div>
<div class="tx" style="left:15.05px;top:159.00px;font-size:18.406px;line-height:18.406px;color:#262626;transform:scaleX(0.9465)">Einfügen</div>
<div class="tx" style="left:120.40px;top:111.00px;font-size:17.971px;line-height:17.971px;color:#a6a6a6;transform:scaleX(0.9652)">Ausschneiden</div>
<div class="tx" style="left:119.70px;top:146.00px;font-size:17.826px;line-height:17.826px;color:#a6a6a6;transform:scaleX(0.9971)">Kopieren</div>
<div class="tx" style="left:119.69px;top:181.00px;font-size:17.899px;line-height:17.899px;color:#262626;transform:scaleX(1.0116)">Format übertragen</div>
<div class="tx" style="left:76.00px;top:215.00px;font-size:14.928px;line-height:14.928px;color:#262626;transform:scaleX(1.0374)">Zwischenablage</div>
<div class="clip" style="left:304.69px;top:122px;width:103.41px;height:24px"><div class="tx" style="left:0;top:0;font-size:18.986px;line-height:18.986px;color:#262626;transform:scaleX(0.9135)">Calibri (Textkörper)</div></div>
<div class="tx" style="left:432.87px;top:122.00px;font-size:18.986px;line-height:18.986px;color:#262626;transform:scaleX(0.8806)">11</div>
<div class="tx" style="left:447.95px;top:215.00px;font-size:15.507px;line-height:15.507px;color:#262626;transform:scaleX(1.0508)">Schriftart</div>
<div class="tx" style="left:826.50px;top:215.00px;font-size:15.507px;line-height:15.507px;color:#262626;transform:scaleX(0.9681)">Absatz</div>
<div class="clip" style="left:1050.00px;top:128px;width:90.30px;height:26px"><div class="tx" style="left:0;top:0;font-size:20.000px;line-height:20.000px;color:#000000;transform:scaleX(0.9448)">AaBbCcDc</div></div>
<div class="tx" style="left:1052.58px;top:165.00px;font-size:18.696px;line-height:18.696px;color:#555555;transform:scaleX(0.9236)">¶ Standard</div>
<div class="clip" style="left:1158.00px;top:128px;width:90.00px;height:26px"><div class="tx" style="left:0;top:0;font-size:20.000px;line-height:20.000px;color:#000000;transform:scaleX(0.9483)">AaBbCcDc</div></div>
<div class="tx" style="left:1157.73px;top:165.00px;font-size:18.696px;line-height:18.696px;color:#555555;transform:scaleX(0.8686)">¶ Kein Lee...</div>
<div class="clip" style="left:1266.00px;top:123px;width:90.00px;height:38px"><div class="tx" style="left:0;top:0;font-size:29.565px;line-height:29.565px;color:#27508f;transform:scaleX(0.8848);-webkit-text-stroke:0.45px #fff">AaBbCcDd</div></div>
<div class="tx" style="left:1263.46px;top:165.00px;font-size:18.696px;line-height:18.696px;color:#555555;transform:scaleX(0.9408)">Überschrif...</div>
<div class="clip" style="left:1374.00px;top:127px;width:90.00px;height:30px"><div class="tx" style="left:0;top:0;font-size:23.188px;line-height:23.188px;color:#27508f;transform:scaleX(0.9452);-webkit-text-stroke:0.3px #fff">AaBbCcDd</div></div>
<div class="tx" style="left:1371.87px;top:165.00px;font-size:18.696px;line-height:18.696px;color:#555555;transform:scaleX(0.9347)">Überschrif...</div>
<div class="clip" style="left:1482.30px;top:115.70px;width:120px;height:67px"><div class="tx" style="left:0;top:-10.70px;font-size:52.174px;line-height:52.174px;color:#000000;transform:scaleX(0.8750);-webkit-text-stroke:1.1px #fff">AaB</div></div>
<div class="tx" style="left:1511.25px;top:165.00px;font-size:18.696px;line-height:18.696px;color:#555555;transform:scaleX(0.9191)">Titel</div>
<div class="tx" style="left:1254.72px;top:213.00px;font-size:18.116px;line-height:18.116px;color:#262626;transform:scaleX(0.8776)">Formatvorlagen</div>
<div class="tx" style="left:1664.65px;top:109.00px;font-size:18.116px;line-height:18.116px;color:#262626;transform:scaleX(0.9492)">Suchen</div>
<div class="tx" style="left:1665.09px;top:143.00px;font-size:18.116px;line-height:18.116px;color:#262626;transform:scaleX(0.9057)">Ersetzen</div>
<div class="tx" style="left:1665.03px;top:177.00px;font-size:18.116px;line-height:18.116px;color:#262626;transform:scaleX(0.9709)">Markieren</div>
<div class="tx" style="left:1660.85px;top:216.00px;font-size:14.638px;line-height:14.638px;color:#262626;transform:scaleX(1.0522)">Bearbeiten</div>
<div class="tx" style="left:10.52px;top:998.00px;font-size:15.652px;line-height:15.652px;color:#444444;transform:scaleX(0.9789)">Seite 1 von 1</div>
<div class="tx" style="left:126.96px;top:998.00px;font-size:15.652px;line-height:15.652px;color:#444444;transform:scaleX(1.0441)">0 Wörter</div>
<div class="tx" style="left:1872.74px;top:998.00px;font-size:15.942px;line-height:15.942px;color:#444444;transform:scaleX(0.9629)">60 %</div>
<div class="tx" style="left:601.25px;top:118.03px;font-size:21.021px;line-height:21.021px;color:#5f5f5f;transform:scaleX(0.9289)">Aa</div>
<div class="tx" style="left:420.22px;top:167.28px;font-size:18.400px;line-height:18.400px;color:#5a5a5a;transform:scaleX(0.8450)">abc</div>
<div class="tx" style="left:471.00px;top:179.10px;font-size:9.573px;line-height:9.573px;color:#417dc4;transform:scaleX(1.0088)">2</div>
<div class="tx" style="left:502.80px;top:164.00px;font-size:9.573px;line-height:9.573px;color:#417dc4;transform:scaleX(1.0088)">2</div>
<div class="tx" style="left:765.43px;top:118.25px;font-size:7.175px;line-height:7.175px;color:#417dc4;transform:scaleX(1.2844);font-weight:bold">1</div>
<div class="tx" style="left:766.20px;top:125.42px;font-size:8.452px;line-height:8.452px;color:#417dc4;transform:scaleX(0.9491);font-weight:bold">2</div>
<div class="tx" style="left:766.20px;top:133.22px;font-size:8.452px;line-height:8.452px;color:#417dc4;transform:scaleX(0.9491);font-weight:bold">3</div>
<div class="tx" style="left:815.43px;top:118.25px;font-size:7.175px;line-height:7.175px;color:#417dc4;transform:scaleX(1.2844);font-weight:bold">1</div>
<div class="tx" style="left:821.90px;top:122.57px;font-size:10.762px;line-height:10.762px;color:#417dc4;transform:scaleX(0.6165);font-weight:bold">a</div>
<div class="tx" style="left:573.25px;top:162.14px;font-size:13.357px;line-height:13.357px;color:#5a5a5a;transform:scaleX(1.0938)">ab</div>
<div class="tx" style="left:1638.20px;top:137.60px;font-size:13.587px;line-height:13.587px;color:#5a5a5a;transform:scaleX(0.9200)">a</div>
<div class="tx" style="left:1645.61px;top:139.04px;font-size:14.804px;line-height:14.804px;color:#7f44ad;transform:scaleX(1.1267)">b</div>
<div class="tx" style="left:1645.80px;top:150.33px;font-size:11.836px;line-height:11.836px;color:#5a5a5a;transform:scaleX(1.0714)">a</div>
<div class="tx" style="left:1653.30px;top:150.33px;font-size:11.836px;line-height:11.836px;color:#417dc4;transform:scaleX(1.2171)">c</div>
</body></html>
